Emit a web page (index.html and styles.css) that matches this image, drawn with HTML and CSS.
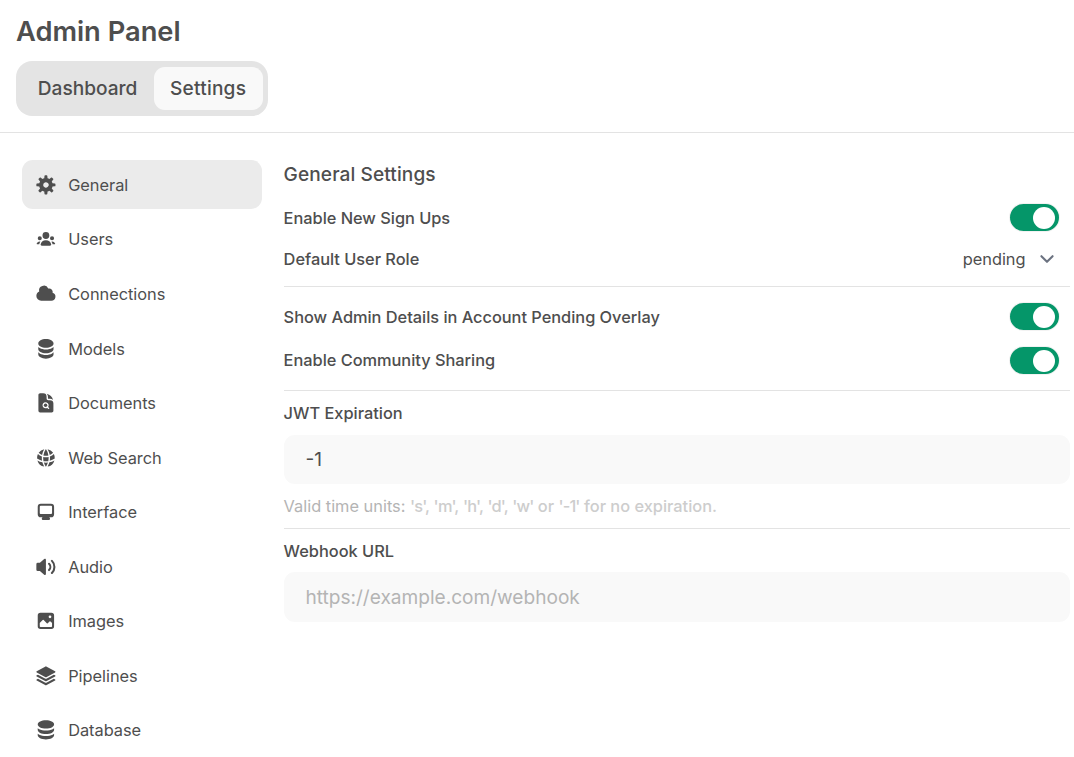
FILE: index.html
```html
<!DOCTYPE html>
<html lang="en">
<head>
<meta charset="utf-8">
<title>Admin Panel</title>
<link rel="stylesheet" href="styles.css">
</head>
<body>
<header class="header">
  <h1 class="title">Admin Panel</h1>
  <nav class="tabs"><a class="tab">Dashboard</a><a class="tab active">Settings</a></nav>
</header>
<div class="layout">
  <aside class="sidebar">
    <a class="item selected"><svg class="icon" viewBox="0 0 16 16"><path fill-rule="evenodd" d="M6.955 1.45A.5.5 0 0 1 7.452 1h1.096a.5.5 0 0 1 .497.45l.17 1.699c.484.12.94.312 1.356.562l1.321-1.081a.5.5 0 0 1 .67.033l.774.775a.5.5 0 0 1 .034.67l-1.08 1.32c.25.417.44.873.561 1.357l1.699.17a.5.5 0 0 1 .45.497v1.096a.5.5 0 0 1-.45.497l-1.699.17c-.12.484-.312.94-.562 1.356l1.082 1.322a.5.5 0 0 1-.034.67l-.774.774a.5.5 0 0 1-.67.033l-1.322-1.08c-.416.25-.872.44-1.356.561l-.17 1.699a.5.5 0 0 1-.497.45H7.452a.5.5 0 0 1-.497-.45l-.17-1.699a4.973 4.973 0 0 1-1.356-.562L4.108 13.37a.5.5 0 0 1-.67-.033l-.774-.775a.5.5 0 0 1-.034-.67l1.08-1.32a4.971 4.971 0 0 1-.561-1.357l-1.699-.17A.5.5 0 0 1 1 8.548V7.452a.5.5 0 0 1 .45-.497l1.699-.17c.12-.484.312-.94.562-1.356L2.629 4.107a.5.5 0 0 1 .034-.67l.774-.774a.5.5 0 0 1 .67-.033L5.43 3.71a4.97 4.97 0 0 1 1.356-.561l.17-1.699ZM6 8c0 .538.212 1.026.558 1.385l.057.057a2 2 0 0 0 2.828-2.828l-.058-.056A2 2 0 0 0 6 8Z"/></svg><span>General</span></a>
    <a class="item"><svg class="icon" viewBox="0 0 16 16"><path d="M8 8a2.5 2.5 0 1 0 0-5 2.5 2.5 0 0 0 0 5ZM3.156 11.763c.16-.629.44-1.21.813-1.72a2.5 2.5 0 0 0-2.725 1.377c-.136.287.102.58.418.58h1.449c.01-.077.025-.156.045-.237ZM12.847 11.763c.02.08.036.16.046.237h1.446c.316 0 .554-.293.417-.579a2.5 2.5 0 0 0-2.722-1.378c.374.51.653 1.09.813 1.72ZM14 7.5a1.5 1.5 0 1 1-3 0 1.5 1.5 0 0 1 3 0ZM3.5 9a1.5 1.5 0 1 0 0-3 1.5 1.5 0 0 0 0 3ZM5 13c-.552 0-1.013-.455-.876-.99a4.002 4.002 0 0 1 7.753 0c.136.535-.324.99-.877.99H5Z"/></svg><span>Users</span></a>
    <a class="item"><svg class="icon" viewBox="0 0 16 16"><path d="M1 9.5A3.5 3.5 0 0 0 4.5 13H12a3 3 0 0 0 .917-5.857 2.503 2.503 0 0 0-3.198-3.019 3.5 3.5 0 0 0-6.628 2.171A3.5 3.5 0 0 0 1 9.5Z"/></svg><span>Connections</span></a>
    <a class="item"><svg class="icon" viewBox="0 0 20 20"><path d="M10 1c3.866 0 7 1.79 7 4s-3.134 4-7 4-7-1.79-7-4 3.134-4 7-4zm5.694 8.13c.464-.264.91-.583 1.306-.952V10c0 2.21-3.134 4-7 4s-7-1.79-7-4V8.178c.396.37.842.688 1.306.953C5.838 10.006 7.854 10.5 10 10.5s4.162-.494 5.694-1.37zM3 13.179V15c0 2.21 3.134 4 7 4s7-1.79 7-4v-1.822c-.396.37-.842.688-1.306.953-1.532.875-3.548 1.369-5.694 1.369s-4.162-.494-5.694-1.37A7.009 7.009 0 013 13.179z"/></svg><span>Models</span></a>
    <a class="item"><svg class="icon" viewBox="0 0 24 24"><path d="M11.625 16.5a1.875 1.875 0 1 0 0-3.75 1.875 1.875 0 0 0 0 3.75Z"/><path fill-rule="evenodd" d="M5.625 1.5H9a3.75 3.75 0 0 1 3.75 3.75v1.875c0 1.036.84 1.875 1.875 1.875H16.5a3.75 3.75 0 0 1 3.75 3.75v7.875c0 1.035-.84 1.875-1.875 1.875H5.625a1.875 1.875 0 0 1-1.875-1.875V3.375c0-1.036.84-1.875 1.875-1.875Zm6 16.5c.66 0 1.277-.19 1.797-.518l1.048 1.048a.75.75 0 0 0 1.06-1.06l-1.047-1.048A3.375 3.375 0 1 0 11.625 18Z"/><path d="M14.25 5.25a5.23 5.23 0 0 0-1.279-3.434 9.768 9.768 0 0 1 6.963 6.963A5.23 5.23 0 0 0 16.5 7.5h-1.875a.375.375 0 0 1-.375-.375V5.25Z"/></svg><span>Documents</span></a>
    <a class="item"><svg class="icon" viewBox="0 0 24 24"><path d="M21.721 12.752a9.711 9.711 0 0 0-.945-5.003 12.754 12.754 0 0 1-4.339 2.708 18.991 18.991 0 0 1-.214 4.772 17.165 17.165 0 0 0 5.498-2.477ZM14.634 15.55a17.324 17.324 0 0 0 .332-4.647c-.952.227-1.945.347-2.966.347-1.021 0-2.014-.12-2.966-.347a17.515 17.515 0 0 0 .332 4.647 17.385 17.385 0 0 0 5.268 0ZM9.772 17.119a18.963 18.963 0 0 0 4.456 0A17.182 17.182 0 0 1 12 21.724a17.18 17.18 0 0 1-2.228-4.605ZM7.777 15.23a18.87 18.87 0 0 1-.214-4.774 12.753 12.753 0 0 1-4.34-2.708 9.711 9.711 0 0 0-.944 5.004 17.165 17.165 0 0 0 5.498 2.477ZM21.356 14.752a9.765 9.765 0 0 1-7.478 6.817 18.64 18.64 0 0 0 1.988-4.718 18.627 18.627 0 0 0 5.49-2.098ZM2.644 14.752c1.682.971 3.53 1.688 5.49 2.099a18.64 18.64 0 0 0 1.988 4.718 9.765 9.765 0 0 1-7.478-6.816ZM13.878 2.43a9.755 9.755 0 0 1 6.116 3.986 11.267 11.267 0 0 1-3.746 2.504 18.63 18.63 0 0 0-2.37-6.49ZM12 2.276a17.152 17.152 0 0 1 2.805 7.121c-.897.23-1.837.353-2.805.353-.968 0-1.908-.122-2.805-.353A17.151 17.151 0 0 1 12 2.276ZM10.122 2.43a18.629 18.629 0 0 0-2.37 6.49 11.266 11.266 0 0 1-3.746-2.504 9.754 9.754 0 0 1 6.116-3.985Z"/></svg><span>Web Search</span></a>
    <a class="item"><svg class="icon" viewBox="0 0 16 16"><path fill-rule="evenodd" d="M2 4.25A2.25 2.25 0 0 1 4.25 2h7.5A2.25 2.25 0 0 1 14 4.25v5.5A2.25 2.25 0 0 1 11.75 12h-1.312c.1.128.21.248.328.36a.75.75 0 0 1 .234.545v.345a.75.75 0 0 1-.75.75h-4.5a.75.75 0 0 1-.75-.75v-.345a.75.75 0 0 1 .234-.545c.118-.111.228-.232.328-.36H4.25A2.25 2.25 0 0 1 2 9.75v-5.5Zm2.25-.75a.75.75 0 0 0-.75.75v4.5c0 .414.336.75.75.75h7.5a.75.75 0 0 0 .75-.75v-4.5a.75.75 0 0 0-.75-.75h-7.5Z"/></svg><span>Interface</span></a>
    <a class="item"><svg class="icon" viewBox="0 0 16 16"><path d="M7.557 2.066A.75.75 0 0 1 8 2.75v10.5a.75.75 0 0 1-1.248.56L3.59 11H2a1 1 0 0 1-1-1V6a1 1 0 0 1 1-1h1.59l3.162-2.81a.75.75 0 0 1 .805-.124ZM12.95 3.05a.75.75 0 1 0-1.06 1.06 5.5 5.5 0 0 1 0 7.78.75.75 0 1 0 1.06 1.06 7 7 0 0 0 0-9.9Z"/><path d="M10.828 5.172a.75.75 0 1 0-1.06 1.06 2.5 2.5 0 0 1 0 3.536.75.75 0 1 0 1.06 1.06 4 4 0 0 0 0-5.656Z"/></svg><span>Audio</span></a>
    <a class="item"><svg class="icon" viewBox="0 0 16 16"><path fill-rule="evenodd" d="M2 4a2 2 0 0 1 2-2h8a2 2 0 0 1 2 2v8a2 2 0 0 1-2 2H4a2 2 0 0 1-2-2V4Zm10.5 5.707a.5.5 0 0 0-.146-.353l-1-1a.5.5 0 0 0-.708 0L9.354 9.646a.5.5 0 0 1-.708 0L6.354 7.354a.5.5 0 0 0-.708 0l-2 2a.5.5 0 0 0-.146.353V12a.5.5 0 0 0 .5.5h8a.5.5 0 0 0 .5-.5V9.707ZM12 5a1 1 0 1 1-2 0 1 1 0 0 1 2 0Z"/></svg><span>Images</span></a>
    <a class="item"><svg class="icon" viewBox="0 0 24 24"><path d="M11.644 1.59a.75.75 0 0 1 .712 0l9.75 5.25a.75.75 0 0 1 0 1.32l-9.75 5.25a.75.75 0 0 1-.712 0l-9.75-5.25a.75.75 0 0 1 0-1.32l9.75-5.25Z"/><path d="m3.265 10.602 7.668 4.129a2.25 2.25 0 0 0 2.134 0l7.668-4.13 1.37.739a.75.75 0 0 1 0 1.32l-9.75 5.25a.75.75 0 0 1-.71 0l-9.75-5.25a.75.75 0 0 1 0-1.32l1.37-.738Z"/><path d="m10.933 19.231-7.668-4.13-1.37.739a.75.75 0 0 0 0 1.32l9.75 5.25c.221.12.489.12.71 0l9.75-5.25a.75.75 0 0 0 0-1.32l-1.37-.738-7.668 4.13a2.25 2.25 0 0 1-2.134-.001Z"/></svg><span>Pipelines</span></a>
    <a class="item"><svg class="icon" viewBox="0 0 16 16"><path d="M8 7c3.314 0 6-1.343 6-3s-2.686-3-6-3-6 1.343-6 3 2.686 3 6 3Z"/><path d="M8 8.5c1.84 0 3.579-.37 4.914-1.037A6.33 6.33 0 0 0 14 6.78V8c0 1.657-2.686 3-6 3S2 9.657 2 8V6.78c.346.273.72.5 1.087.683C4.42 8.131 6.16 8.5 8 8.5Z"/><path d="M8 12.5c1.84 0 3.579-.37 4.914-1.037.366-.183.74-.41 1.086-.684V12c0 1.657-2.686 3-6 3s-6-1.343-6-3v-1.22c.346.273.72.5 1.087.683C4.42 12.131 6.16 12.5 8 12.5Z"/></svg><span>Database</span></a>
  </aside>
  <main class="main">
    <h2 class="heading">General Settings</h2>
    <div class="row signups"><span class="name">Enable New Sign Ups</span><span class="switch"><i class="thumb"></i></span></div>
    <div class="row role"><span class="name">Default User Role</span><span class="select"><span class="name">pending</span><svg class="chevron" viewBox="0 0 20 20"><path d="m6 8 4 4 4-4"/></svg></span></div>
    <hr class="rule">
    <div class="row details"><span class="name">Show Admin Details in Account Pending Overlay</span><span class="switch"><i class="thumb"></i></span></div>
    <div class="row sharing"><span>Enable Community Sharing</span><span class="switch"><i class="thumb"></i></span></div>
    <hr class="rule">
    <label class="label" for="jwt">JWT Expiration</label>
    <input class="field" id="jwt" type="text" value="-1">
    <p class="hint">Valid time units: <span class="units"><span class="unit">'s',</span> <span class="unit">'m',</span> <span class="unit">'h',</span> <span class="unit">'d',</span> <span class="unit">'w'</span> or <span class="unit">'-1'</span> for no expiration.</span></p>
    <hr class="rule">
    <label class="label" for="hook">Webhook URL</label>
    <input class="field webhook" id="hook" type="text" placeholder="https://example.com/webhook">
  </main>
</div>
</body>
</html>
```
FILE: styles.css
```css
* { box-sizing: border-box; }
html { font-size: 21.818px; overflow: hidden; }
body { margin: 0; background: #fff; color: #4e4e4e; font-family: Inter, "Liberation Sans", sans-serif; }
.header { height: 133px; padding: 14px 16px 0; border-bottom: 1px solid #e3e3e3; }
.title { margin: 0 0 11px; font-size: 1.25rem; line-height: 36px; font-weight: 600; }
.tabs { display: inline-flex; padding: 6px 5px 6px .25rem; border-radius: .75rem; background: #e4e4e4; vertical-align: top; }
.tab { padding: 0 .75rem; font-size: .875rem; line-height: 43px; font-weight: 500; border-radius: .5rem; }
.tab.active { background: #f9f9f9; letter-spacing: .22px; }
.layout { display: flex; padding: 27.3px 4px 0 1rem; }
.sidebar { flex: none; width: 11rem; display: flex; flex-direction: column; gap: .25rem; }
.item { display: flex; align-items: center; gap: .5rem; height: 2.25rem; padding: 0 .625rem; border-radius: .5rem; font-size: .75rem; line-height: 1rem; }
.item span { padding-top: 2px; letter-spacing: -.02px; }
.item.selected { background: #ebebeb; }
.icon { flex: none; width: 1rem; height: 1rem; fill: #4e4e4e; }
.main { flex: 1; margin-left: 1rem; font-size: .75rem; font-weight: 500; line-height: 1rem; }
.heading { margin: 0; padding-top: 1px; font-size: .875rem; font-weight: 500; line-height: 28px; letter-spacing: .1px; }
.row { display: flex; align-items: center; justify-content: space-between; padding-right: 11px; letter-spacing: -.02px; }
.name { padding-top: 2px; }
.signups { height: 44px; margin-top: 6.7px; }
.role { height: 38px; }
.details { height: 44px; margin-top: 8px; }
.sharing { height: 43px; margin-bottom: 8px; }
.switch { width: 49px; height: 27px; padding: 2.5px 4px; display: flex; justify-content: flex-end; border-radius: 14px; background: #059669; box-shadow: 0 0 0 1px #f2f2f2; }
.thumb { width: 22px; height: 22px; margin-top: .5px; border-radius: 50%; background: #fff; }
.select { display: flex; align-items: center; gap: 7px; font-weight: 400; }
.chevron { width: 28px; height: 28px; margin-right: -1.5px; fill: none; stroke: #6b7280; stroke-width: 1.5; stroke-linecap: round; stroke-linejoin: round; }
.rule { height: 1px; margin: 8px 0 0; border: 0; background: #e3e3e3; }
.label { display: block; margin: 12px 0 10px; }
.field { display: block; width: 100%; height: 49px; padding: 0 1rem; border: 0; outline: 0; border-radius: .5rem; background: #f9f9f9; color: #4e4e4e; font: 400 .875rem Inter, sans-serif; }
.field.webhook { height: 50px; margin-top: -.7px; padding-top: 2px; }
.field::placeholder { color: #b4b4b4; opacity: 1; }
.hint { margin: 12px 0 10px; color: #b4b4b4; font-weight: 400; }
.units { color: #cdcdcd; font-weight: 500; }
.unit { letter-spacing: -.84px; }
```
